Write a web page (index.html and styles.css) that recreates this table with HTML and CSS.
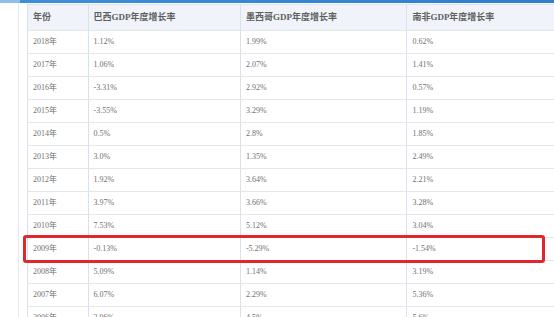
FILE: index.html
```html
<!DOCTYPE html>
<html lang="zh-CN">
<head>
    <meta charset="UTF-8">
    <title>GDP年度增长率</title>
    <link rel="stylesheet" href="styles.css">
</head>
<body>
    <div class="top-bar"></div>
    <div class="page">
        <div class="side"></div>
        <div class="content">
            <table class="gdp-table">
                <thead>
                    <tr>
                        <th class="c-year">年份</th>
                        <th class="c-br">巴西GDP年度增长率</th>
                        <th class="c-mx">墨西哥GDP年度增长率</th>
                        <th class="c-za">南非GDP年度增长率</th>
                    </tr>
                </thead>
                <tbody>
                    <tr><td>2018年</td><td>1.12%</td><td>1.99%</td><td>0.62%</td></tr>
                    <tr><td>2017年</td><td>1.06%</td><td>2.07%</td><td>1.41%</td></tr>
                    <tr><td>2016年</td><td>-3.31%</td><td>2.92%</td><td>0.57%</td></tr>
                    <tr><td>2015年</td><td>-3.55%</td><td>3.29%</td><td>1.19%</td></tr>
                    <tr><td>2014年</td><td>0.5%</td><td>2.8%</td><td>1.85%</td></tr>
                    <tr><td>2013年</td><td>3.0%</td><td>1.35%</td><td>2.49%</td></tr>
                    <tr><td>2012年</td><td>1.92%</td><td>3.64%</td><td>2.21%</td></tr>
                    <tr><td>2011年</td><td>3.97%</td><td>3.66%</td><td>3.28%</td></tr>
                    <tr><td>2010年</td><td>7.53%</td><td>5.12%</td><td>3.04%</td></tr>
                    <tr><td>2009年</td><td>-0.13%</td><td>-5.29%</td><td>-1.54%</td></tr>
                    <tr><td>2008年</td><td>5.09%</td><td>1.14%</td><td>3.19%</td></tr>
                    <tr><td>2007年</td><td>6.07%</td><td>2.29%</td><td>5.36%</td></tr>
                    <tr><td>2006年</td><td>3.96%</td><td>4.5%</td><td>5.6%</td></tr>
                </tbody>
            </table>
            <div class="highlight"></div>
        </div>
    </div>
</body>
</html>
```

FILE: styles.css
```css
body {
    margin: 0;
    background-color: #ffffff;
    font-family: "Liberation Serif", "Noto Sans CJK SC", serif;
    overflow: hidden;
    height: 317px;
}

.top-bar {
    height: 3px;
    background: linear-gradient(to right, #8cbfe9 0, #8cbfe9 20px, #3d8fd8 20px, #2f7fcc 100%);
}

.page {
    display: flex;
    height: 314px;
}

.side {
    width: 18px;
    flex: none;
    border-right: 1px solid #e6e9ee;
}

.content {
    position: relative;
    padding: 1px 0 0 8px;
    flex: none;
}

.gdp-table {
    border-collapse: collapse;
    table-layout: fixed;
    width: 560px;
    color: #707070;
    font-size: 8px;
}

.gdp-table th,
.gdp-table td {
    border-top: 1px solid #e3e6ea;
    border-bottom: 1px solid #e3e6ea;
    border-left: 1px solid #d9e1ec;
    border-right: 1px solid #d9e1ec;
    padding: 0 0 0 5px;
    text-align: left;
    white-space: nowrap;
    line-height: 22px;
}

.gdp-table th {
    background-color: #f0f4fa;
    border-top-color: #dfe5ee;
    color: #5f5f5f;
    font-size: 9px;
    font-weight: bold;
    line-height: 25px;
}

.c-year { width: 54px; }
.c-br { width: 145px; }
.c-mx { width: 159px; }
.c-za { width: 172px; }

.highlight {
    position: absolute;
    left: 4px;
    top: 232px;
    width: 516px;
    height: 22px;
    border: 3px solid #e2262b;
    border-radius: 3px;
}
```
